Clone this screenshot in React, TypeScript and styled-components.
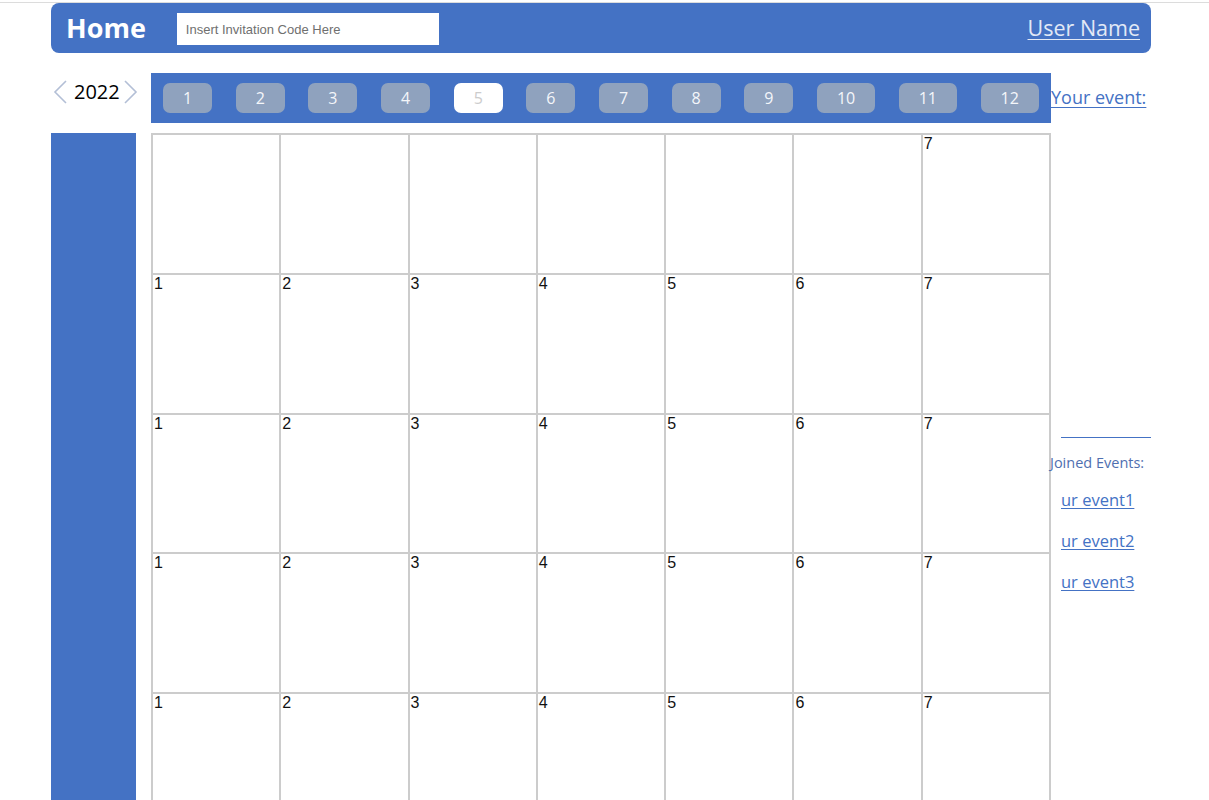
import React from "react";
import styled, { createGlobalStyle } from "styled-components";

const Global = createGlobalStyle`
  html, body { margin: 0; padding: 0; background: #fff; }
  body { font-family: "Open Sans", "Noto Sans", sans-serif; overflow: hidden; }
`;

const Screen = styled.div`
  margin-top: 2px;
  border-top: 1px solid #dcdcdc;
`;

const Page = styled.div`
  padding-left: 51px;
  width: 1100px;
`;

const Header = styled.header`
  display: flex;
  align-items: center;
  height: 50px;
  background: #4472c4;
  border-radius: 8px;
  padding: 0 11px 0 15px;
`;

const Brand = styled.div`
  font-family: "Open Sans", sans-serif;
  font-weight: 700;
  font-size: 27px;
  color: #fff;
  margin-right: 31px;
  margin-top: -2px;
`;

const CodeInput = styled.input`
  width: 262px;
  height: 32px;
  box-sizing: border-box;
  border: none;
  outline: none;
  padding: 0 9px;
  font-family: "Liberation Sans", Arial, sans-serif;
  font-size: 13px;
  color: #333;
  margin-top: 2px;
  &::placeholder { color: #6f6f6f; }
`;

const UserLink = styled.a`
  margin-left: auto;
  font-size: 21.5px;
  color: #e2e9f6;
  text-decoration: underline;
  text-underline-offset: 3px;
  text-decoration-thickness: 1px;
  margin-top: -2px;
`;

const Body = styled.div`
  display: flex;
  margin-top: 20px;
`;

const LeftCol = styled.div`
  width: 85px;
  margin-right: 15px;
  display: flex;
  flex-direction: column;
`;

const YearRow = styled.div`
  height: 50px;
  display: flex;
  align-items: center;
  gap: 3px;
  padding-bottom: 13px;
  box-sizing: border-box;
  padding-left: 2px;
`;

const Year = styled.span`
  font-size: 20px;
  color: #000;
  font-family: "Open Sans", sans-serif;
  margin: 0 0 0 3px;
`;

const Chevron = styled.svg`
  width: 15px;
  height: 24px;
  flex: none;
`;

const SideBar = styled.div`
  margin-top: 10px;
  background: #4472c4;
  height: 700px;
`;

const Center = styled.div`
  width: 900px;
  display: flex;
  flex-direction: column;
`;

const MonthBar = styled.nav`
  height: 50px;
  background: #4472c4;
  display: flex;
  align-items: center;
  gap: 23.5px;
  padding-left: 12px;
`;

const MonthButton = styled.button<{ $active?: boolean }>`
  height: 30px;
  padding: 0 20px;
  border: none;
  border-radius: 7px;
  font-family: "Open Sans", sans-serif;
  font-size: 16px;
  background: ${(p) => (p.$active ? "#ffffff" : "#8fa2be")};
  color: ${(p) => (p.$active ? "#cccccc" : "#f4f6fa")};
  cursor: pointer;
  line-height: 30px;
`;

const Grid = styled.div`
  margin-top: 10px;
  display: grid;
  grid-template-columns: repeat(7, 1fr);
  grid-auto-rows: 137.8px;
  gap: 2px;
  padding: 2px;
  background: #cccccc;
`;

const Cell = styled.div`
  background: #fff;
  font-family: "Liberation Sans", Arial, sans-serif;
  font-size: 16px;
  color: #111;
  padding: 0 1px;
  line-height: 17px;
`;

const RightCol = styled.aside`
  width: 100px;
  display: flex;
  flex-direction: column;
`;

const YourEvent = styled.a`
  height: 50px;
  display: flex;
  align-items: center;
  font-size: 18px;
  color: #4472c4;
  text-decoration: underline;
  text-decoration-thickness: 1px;
  text-underline-offset: 3px;
  white-space: nowrap;
  padding-bottom: 3px;
  box-sizing: border-box;
`;

const Divider = styled.hr`
  margin: 314px 0 0 10px;
  border: none;
  border-top: 1px solid #4472c4;
  width: 90px;
`;

const JoinedTitle = styled.div`
  margin-top: 15px;
  margin-left: -1px;
  font-size: 14.5px;
  color: #4f6fb0;
  white-space: nowrap;
`;

const EventList = styled.div`
  display: flex;
  flex-direction: column;
  gap: 18px;
  margin-top: 16px;
  padding-left: 10px;
`;

const EventLink = styled.a`
  font-size: 16.5px;
  color: #4472c4;
  text-decoration: underline;
  text-decoration-thickness: 1px;
  text-underline-offset: 2px;
  line-height: 23px;
`;

const months = [1, 2, 3, 4, 5, 6, 7, 8, 9, 10, 11, 12];

export default function App() {
  const rows: (number | null)[][] = [
    [null, null, null, null, null, null, 7],
    [1, 2, 3, 4, 5, 6, 7],
    [1, 2, 3, 4, 5, 6, 7],
    [1, 2, 3, 4, 5, 6, 7],
    [1, 2, 3, 4, 5, 6, 7],
  ];
  return (
    <>
      <Global />
      <Screen>
        <Page>
          <Header>
            <Brand>Home</Brand>
            <CodeInput placeholder="Insert Invitation Code Here" />
            <UserLink href="#">User Name</UserLink>
          </Header>
          <Body>
            <LeftCol>
              <YearRow>
                <Chevron viewBox="0 0 15 24">
                  <polyline points="13,1 2,12 13,23" fill="none" stroke="#b3bfd6" strokeWidth="1.6" />
                </Chevron>
                <Year>2022</Year>
                <Chevron viewBox="0 0 15 24">
                  <polyline points="2,1 13,12 2,23" fill="none" stroke="#b3bfd6" strokeWidth="1.6" />
                </Chevron>
              </YearRow>
              <SideBar />
            </LeftCol>
            <Center>
              <MonthBar>
                {months.map((m) => (
                  <MonthButton key={m} $active={m === 5}>
                    {m}
                  </MonthButton>
                ))}
              </MonthBar>
              <Grid>
                {rows.flat().map((d, i) => (
                  <Cell key={i}>{d ?? ""}</Cell>
                ))}
              </Grid>
            </Center>
            <RightCol>
              <YourEvent href="#">Your event:</YourEvent>
              <Divider />
              <JoinedTitle>Joined Events:</JoinedTitle>
              <EventList>
                <EventLink href="#">ur event1</EventLink>
                <EventLink href="#">ur event2</EventLink>
                <EventLink href="#">ur event3</EventLink>
              </EventList>
            </RightCol>
          </Body>
        </Page>
      </Screen>
    </>
  );
}
